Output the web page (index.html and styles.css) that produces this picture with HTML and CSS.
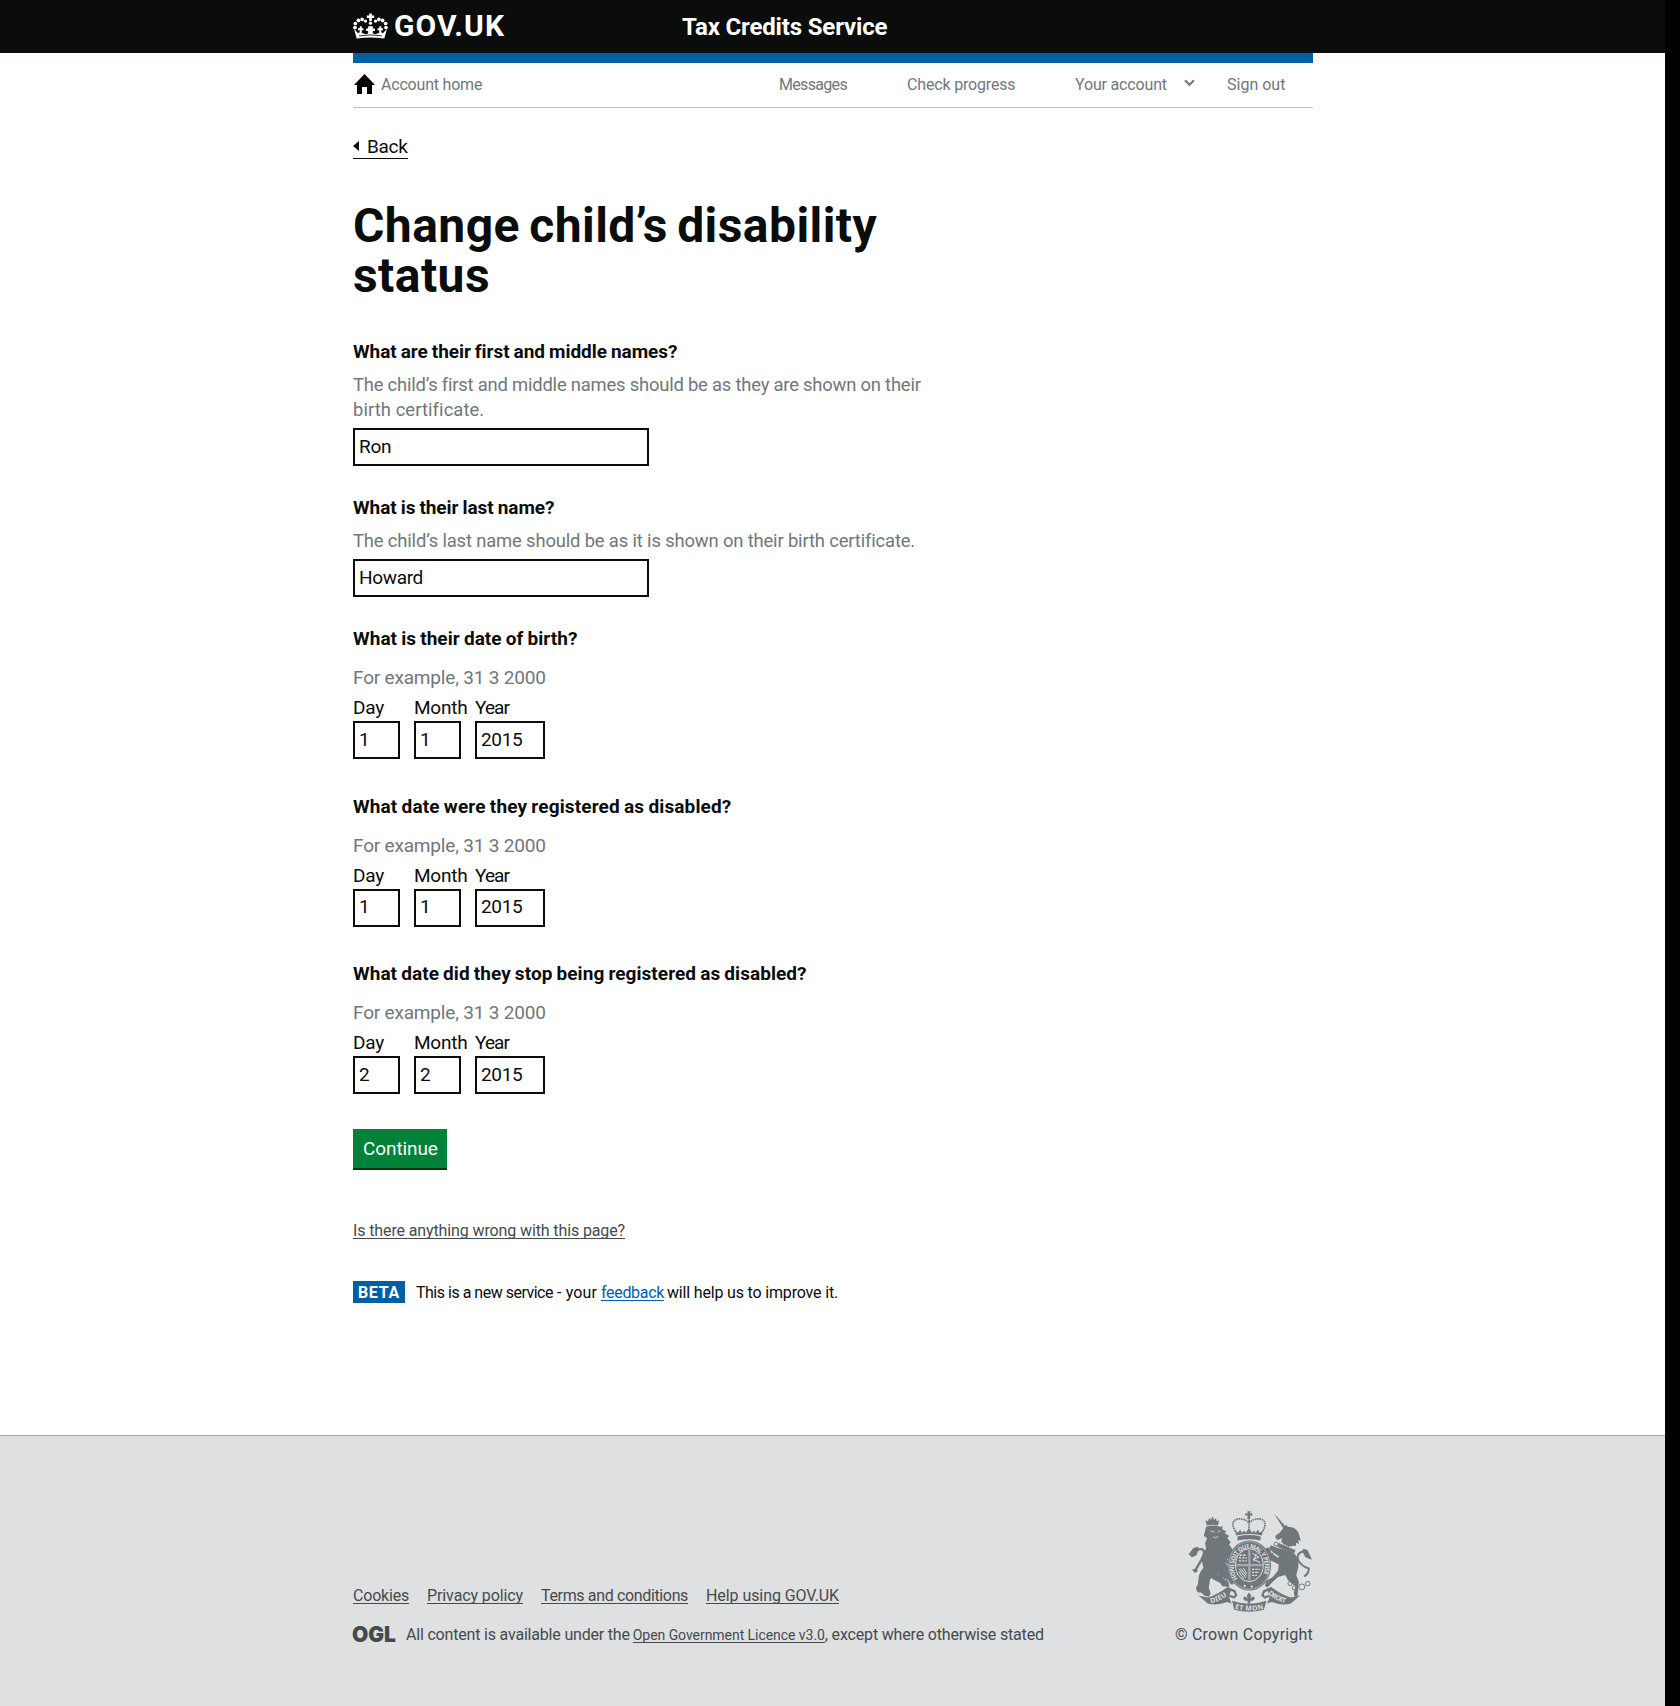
FILE: index.html
```html
<!DOCTYPE html>
<html lang="en">
<head>
<meta charset="utf-8">
<title>Change child’s disability status</title>
<link rel="stylesheet" href="styles.css">
</head>
<body>
<header class="header">
  <div class="wrap header-inner">
    <a class="logo" href="#">
      <svg class="crown" viewBox="25 23 104 77" aria-hidden="true">
        <g fill="#fff">
          <path d="M73 24h8v6h7v8h-7v9h-8v-9h-7v-8h7z"/>
          <circle cx="31" cy="66" r="5.5"/><circle cx="32" cy="54" r="5.5"/><circle cx="41" cy="45" r="5.5"/><circle cx="52" cy="42" r="5.5"/><circle cx="62" cy="47" r="5"/>
          <circle cx="123" cy="66" r="5.5"/><circle cx="122" cy="54" r="5.5"/><circle cx="113" cy="45" r="5.5"/><circle cx="102" cy="42" r="5.5"/><circle cx="92" cy="47" r="5"/>
          <circle cx="77" cy="53" r="5"/>
          <path d="M36 99 28 70l12 13 5-3v-6h-5v-6h5v-6h6v6h5v6h-5v8l12 4 7-2v-8h-6v-7h6v-7h14v7h6v7h-6v8l7 2 12-4v-8h-5v-6h5v-6h6v6h5v6h-5v6l5 3 12-13-8 29Q77 93 36 99Z"/>
        </g>
        <path d="M43 91Q77 85 111 91" fill="none" stroke="#0b0c0c" stroke-width="2.5"/>
      </svg>
      <span class="logo-text">GOV.UK</span>
    </a>
    <a class="service" href="#">Tax Credits Service</a>
  </div>
</header>

<div class="wrap">
  <nav class="account">
    <a class="home" href="#">
      <svg viewBox="0 0 21 20" aria-hidden="true"><path d="M10.5 0 21 11h-3v9h-5v-7H8v7H3v-9H0z" fill="#000"/></svg>
      <span>Account home</span>
    </a>
    <a class="messages" href="#">Messages</a>
    <a class="progress" href="#">Check progress</a>
    <a class="your-account" href="#">Your account</a>
    <svg class="chevron" viewBox="0 0 11 8" aria-hidden="true"><path d="m1 1.2 4.5 4.6L10 1.2" fill="none" stroke="#6f777b" stroke-width="2"/></svg>
    <a class="sign-out" href="#">Sign out</a>
  </nav>

  <main>
    <a class="back" href="#"><span class="arrow"></span><span>Back</span></a>

    <h1>Change child’s disability<br>status</h1>

    <form>
      <div class="group">
        <label class="label tight" for="first">What are their first and middle names?</label>
        <p class="hint">The child’s first and middle names should be as they are shown on their<br><span class="hint-end">birth certificate.</span></p>
        <input class="field" id="first" value="Ron">
      </div>
      <div class="group">
        <label class="label tight" for="last">What is their last name?</label>
        <p class="hint hint-last">The child’s last name should be as it is shown on their birth certificate.</p>
        <input class="field" id="last" value="Howard">
      </div>

      <fieldset class="date">
        <legend class="label">What is their date of birth?</legend>
        <p class="example">For example, 31 3 2000</p>
        <div class="parts">
          <label><span class="day">Day</span><input class="two" value="1"></label>
          <label><span class="month">Month</span><input class="two" value="1"></label>
          <label><span class="year">Year</span><input class="four" value="2015"></label>
        </div>
      </fieldset>
      <fieldset class="date">
        <legend class="label loose">What date were they registered as disabled?</legend>
        <p class="example">For example, 31 3 2000</p>
        <div class="parts">
          <label><span class="day">Day</span><input class="two" value="1"></label>
          <label><span class="month">Month</span><input class="two" value="1"></label>
          <label><span class="year">Year</span><input class="four" value="2015"></label>
        </div>
      </fieldset>
      <fieldset class="date">
        <legend class="label">What date did they stop being registered as disabled?</legend>
        <p class="example">For example, 31 3 2000</p>
        <div class="parts">
          <label><span class="day">Day</span><input class="two" value="2"></label>
          <label><span class="month">Month</span><input class="two" value="2"></label>
          <label><span class="year">Year</span><input class="four" value="2015"></label>
        </div>
      </fieldset>
      <button class="button" type="button">Continue</button>
    </form>

    <p class="report"><a href="#">Is there anything wrong with this page?</a></p>

    <div class="phase">
      <strong class="tag">BETA</strong>
      <p class="phase-text"><span class="intro">This is a new service</span><span class="your">- your</span><a class="feedback" href="#">feedback</a><span class="outro">will help us to improve it.</span></p>
    </div>
  </main>
</div>

<footer class="footer">
  <div class="wrap footer-inner">
    <div>
      <nav class="links">
        <a class="cookies" href="#">Cookies</a>
        <a class="privacy" href="#">Privacy policy</a>
        <a class="terms" href="#">Terms and conditions</a>
        <a class="help" href="#">Help using GOV.UK</a>
      </nav>
      <div class="licence">
        <svg class="ogl" viewBox="0 0 42 18" aria-hidden="true"><text x="-1" y="16.5" textLength="44" lengthAdjust="spacingAndGlyphs">OGL</text></svg>
        <p><span class="available">All content is available under the</span> <a class="ogl-link" href="#">Open Government Licence v3.0</a><span class="except">, except where otherwise stated</span></p>
      </div>
    </div>
    <div class="copyright">
      <svg class="crest" viewBox="84 62 375 306" aria-hidden="true">
        <g fill="#6f777b">
          <!-- crown -->
          <path d="M262 63h10l-2 7 7-2v9l-7-2 1 11h-9l1-11-7 2v-9l7 2z"/>
          <path d="M232 151v-12q35-8 70 0v12q-35-7-70 0z"/>
          <path d="m228 136-4-16 10 8 6-10 5 10 7-6 5 6 10-14 9 14 6-6 6 6 5-10 7 10 10-8-4 16q-38-9-78 0z"/>
          <!-- lion -->
          <path d="m139 106-4-17 8 5 3-11 6 6 4-11 5 11 6-6 2 11 7-5-3 17q-17-5-34 0z"/>
          <path d="M137 110q20-8 42 0l9-2-3 9 14 6-6 6 14 9-6 6 10 12-4 8 10 14 2 16-5 10-6-6 1 14-10-5 6 12-10-2 10 16 6 20 12 18-4 14-8-1-6-12-22-8-12-14q-14 6-22 20l-4 24 6 18-6 10-14-4-8-8-12-2-5-12 6-12 3-26q4-14 14-24l-6-24q0-20 14-34l-3-16 6-16-10-6z"/>
          <path d="m84 193 14-18 12-5 6 4-8 22-14 6z"/>
          <path d="m192 214 16-4 8 10-8 8zM94 240l14-4 4 8-8 6z"/>
          <!-- lion hind leg -->
          <path d="m160 240 26 26 18 8 4 18-22-2-6-10-24-12-10-16z"/>
          <!-- unicorn -->
          <path d="m342 69 36 40-7 5z"/>
          <path d="m372 112 8-8 4 6q22 0 32 16l8 26-8-2 3 12-9-4-1 10q-14-2-26 6l-18-18 2-12-12 6-8-6 1-8 12-8z"/>
          <path d="m358 158 50 22-4 10-52-20z"/>
          <path d="M354 174q34 6 52 18 14 18 10 42l-6 22 8 20-4 44-8 2-3-10 4-22-22-18-8-16-22 6-16 14-16 18-8-6 4-14 20-12 16-20 2-18-28-14-12-22-8-2 2-8 16-6 8 18 20 14 4-4q-22-12-30-26l4-8z"/>
          <path d="m458 210-14-30-12-4-4 8 10 18z"/>
        </g>
        <path d="m150 122 12 4M172 126l8-3M158 140l8 3 8-4" fill="none" stroke="#dee0e2" stroke-width="2.5"/>
        <path d="m362 160 46 19" stroke="#dee0e2" stroke-width="4" stroke-dasharray="4 3"/>
        <g fill="none" stroke="#6f777b">
          <path d="M108 182q26-14 22 14-10 20-26 46" stroke-width="7"/>
          <path d="M434 184q-26 4-18 28 14 20 32 24 0 16-14 24" stroke-width="6"/>
          <path d="M226 124q-18-30 6-38 22-2 35 12 13-14 35-12 24 8 6 38M267 88v30" stroke-width="5" stroke-dasharray="5 2"/>
          <g stroke-width="3"><circle cx="391" cy="282" r="6"/><circle cx="405" cy="295" r="7"/><circle cx="427" cy="292" r="9"/><circle cx="445" cy="282" r="7"/><circle cx="349" cy="162" r="6"/><circle cx="337" cy="184" r="7"/><circle cx="344" cy="206" r="6"/></g>
        </g>
        <!-- garter and shield -->
        <ellipse cx="268" cy="227" rx="66" ry="76" fill="#6f777b"/>
        <ellipse cx="268" cy="227" rx="62" ry="72" fill="none" stroke="#dee0e2" stroke-width="1.5"/>
        <ellipse cx="268" cy="226" rx="42" ry="50" fill="#6f777b" stroke="#dee0e2" stroke-width="3"/>
        <path d="M268 180v92M228 226h80" stroke="#a4aaad" stroke-width="7"/>
        <path d="M239 196h20M236 204h24M236 213h24M276 239h24M276 248h22M276 257h15" stroke="#dee0e2" stroke-width="4" stroke-dasharray="7 3"/>
        <path d="m277 190 20 12-18 6 22 10M281 215l8-24M237 237l20 27M242 236l17 22M250 235l10 17M236 245l15 22" stroke="#dee0e2" stroke-width="3" fill="none"/>
        <path id="garter" d="M233 267A47 55 0 1 1 303 267" fill="none"/>
        <text class="motto"><textPath href="#garter" textLength="222">HONI SOIT QUI MAL Y PENSE</textPath></text>
        <circle cx="254" cy="289" r="3.5" fill="#dee0e2"/><circle cx="275" cy="291" r="3.5" fill="#dee0e2"/>
        <!-- ribbon -->
        <path d="m114 318 28 6q32-10 60-32l24 10 6 16-10 10-16-6 8 20-14-4q-30 12-58 4zM422 318l-28 6q-32-10-60-32l-24 10-6 16 10 10 16-6-8 20 14-4q30 12 58 4z" fill="#6f777b"/>
        <path d="m216 334q52 18 104 0l-8 27q-44 13-90 0z" fill="#6f777b"/>
        <path d="M212 304q16 4 10 16l-14-4zM324 304q-16 4-10 16l14-4z" fill="#dee0e2"/>
        <path d="m267 309 7 10-3 8 9-7 5 7-6 7h-7l-2 9h-6l-2-9h-7l-6-7 5-7 9 7-3-8z" fill="#6f777b"/>
        <path id="ribbon-left" d="M152 341q30-6 54-27" fill="none"/><path id="ribbon-mid" d="M224 358q42 12 92 0" fill="none"/><path id="ribbon-right" d="M324 313q24 22 58 29" fill="none"/>
        <g class="motto ribbon"><text><textPath href="#ribbon-left" textLength="54">DIEU</textPath></text><text><textPath href="#ribbon-mid" textLength="88">ET MON</textPath></text><text><textPath href="#ribbon-right" textLength="60">DROIT</textPath></text></g>
      </svg>
      <a class="crown-copyright" href="#">© Crown Copyright</a>
    </div>
  </div>
</footer>
</body>
</html>
```
FILE: styles.css
```css
* { box-sizing: border-box; }
html { background: #000; }
body {
  width: 1665px;
  margin: 0;
  background: #fff;
  color: #0b0c0c;
  font: 19px/25px Roboto, sans-serif;
}
a { color: inherit; text-decoration: none; }
p, h1 { margin: 0; }
.wrap { width: 960px; margin-left: 353px; }

/* Header */
.header { width: 1680px; height: 53px; background: #0b0c0c; }
.header-inner { display: flex; align-items: center; height: 53px; color: #fff; font-weight: 700; white-space: nowrap; }
.logo { display: flex; align-items: center; width: 329px; }
.crown { width: 35px; height: 26px; margin: -2px 6px 0 0; }
.logo-text { padding-bottom: 1px; font-size: 30px; line-height: 52px; letter-spacing: 1.05px; }
.service { padding-top: 2px; font-size: 24px; letter-spacing: -0.16px; }

/* Account navigation */
.account {
  display: flex;
  align-items: center;
  height: 55px;
  border-top: 10px solid #005ea5;
  border-bottom: 1px solid #bfc1c3;
  color: #6f777b;
  font-size: 16px;
  line-height: 23px;
  letter-spacing: -0.17px;
  white-space: nowrap;
}
.account > a { height: 24px; }
.home { display: flex; align-items: flex-start; gap: 6px; width: 426px; letter-spacing: -0.2px; }
.home svg { width: 21px; height: 20px; margin: 1px 0 0 1px; }
.messages { width: 128px; letter-spacing: -0.676px; }
.progress { width: 168px; }
.your-account { width: 109px; }
.chevron { width: 11px; height: 8px; margin-top: -4px; }
.sign-out { margin-left: 32px; letter-spacing: 0; }

/* Page heading */
.back {
  display: flex;
  align-items: center;
  gap: 8px;
  width: 55px;
  height: 25px;
  margin-top: 26px;
  padding-top: 1px;
  border-bottom: 1px solid #0b0c0c;
  line-height: 24px;
  letter-spacing: -0.3px;
}
.arrow { margin-top: -1px; border: 5px solid transparent; border-left: 0; border-right: 6px solid #0b0c0c; }
h1 { margin: 42px 0 38px; font-size: 48px; line-height: 50px; letter-spacing: 0.44px; word-spacing: -3px; white-space: nowrap; }

/* Form */
.label { display: block; padding: 0; font-weight: 700; letter-spacing: 0.06px; word-spacing: -0.7px; white-space: nowrap; }
.tight { letter-spacing: -0.04px; }
.loose { letter-spacing: 0.14px; }
.hint, .example { color: #6f777b; white-space: nowrap; }
.hint { margin: 8px 0 6px; font-size: 18.4px; letter-spacing: -0.2px; }
.hint-end { letter-spacing: 0.08px; }
.hint-last { letter-spacing: -0.15px; }
.group { margin-bottom: 29px; }
input {
  display: block;
  height: 38px;
  padding: 3px 4px 5px;
  border: 2px solid #0b0c0c;
  border-radius: 0;
  background: #fff;
  color: #0b0c0c;
  font: 19px Roboto, sans-serif;
  letter-spacing: -0.33px;
}
.field { width: 296px; }
.date { margin: 0 0 34.5px; padding: 0; border: 0; }
.example { margin: 14px 0 5px; letter-spacing: -0.18px; }
.parts { display: flex; gap: 14px; }
.parts label { width: 47px; white-space: nowrap; }
.parts input { margin-top: 1px; }
.day { letter-spacing: -0.22px; }
.month { letter-spacing: -0.25px; }
.year { letter-spacing: -0.9px; }
.two { width: 47px; }
.four { width: 70px; }
.button {
  display: block;
  width: 94px;
  height: 41px;
  padding: 2px 10px 0;
  border: 0;
  border-bottom: 2px solid #003618;
  background: #00823b;
  color: #fff;
  font: 19px/26px Roboto, sans-serif;
  letter-spacing: -0.1px;
  text-align: left;
}

/* Feedback */
.report { height: 20px; margin-top: 50px; padding-top: 1px; color: #454a4c; font-size: 16px; line-height: 20px; letter-spacing: -0.12px; }
.report a, .feedback, .links a, .ogl-link { text-decoration: underline 1px; text-underline-offset: 2px; text-decoration-skip-ink: none; }
.phase { display: flex; align-items: center; height: 22px; margin: 41px 0 132px; font-size: 16px; line-height: 20px; }
.tag { width: 52px; height: 22px; margin-right: 11px; padding: 2px 5px 0; background: #005ea5; color: #fff; letter-spacing: 0.65px; }
.phase-text { display: flex; padding-top: 2px; white-space: nowrap; }
.intro { letter-spacing: -0.495px; }
.your { margin-left: 4px; letter-spacing: 0.13px; }
.feedback { margin-left: 4px; color: #005ea5; letter-spacing: -0.318px; }
.outro { margin-left: 3px; letter-spacing: -0.172px; }

/* Footer */
.footer { height: 271px; padding-top: 75px; border-top: 1px solid #a1acb2; background: #dee0e2; color: #454a4c; font-size: 16px; line-height: 20px; }
.footer-inner { display: flex; justify-content: space-between; align-items: flex-end; white-space: nowrap; }
.links { display: flex; gap: 18px; margin-bottom: 19px; }
.cookies { letter-spacing: -0.2px; }
.privacy { letter-spacing: -0.107px; }
.terms { letter-spacing: -0.353px; }
.help { letter-spacing: -0.076px; }
.licence { display: flex; height: 20px; }
.licence p { display: flex; align-items: baseline; }
.available { letter-spacing: -0.19px; }
.ogl-link { margin-left: 3px; font-size: 14px; letter-spacing: -0.05px; }
.except { letter-spacing: -0.169px; }
.ogl { width: 42px; height: 18px; margin-right: 11px; overflow: visible; }
.ogl text { font: 900 22px Inter, sans-serif; fill: #454a4c; }
.copyright { display: flex; flex-direction: column; align-items: flex-end; height: 134px; }
.crest { width: 125px; height: 102px; margin-bottom: 13px; }
.crown-copyright { letter-spacing: 0.204px; }
.motto { font: 700 18px "Noto Sans", sans-serif; fill: #dee0e2; }
.ribbon { font-size: 21px; }
```
